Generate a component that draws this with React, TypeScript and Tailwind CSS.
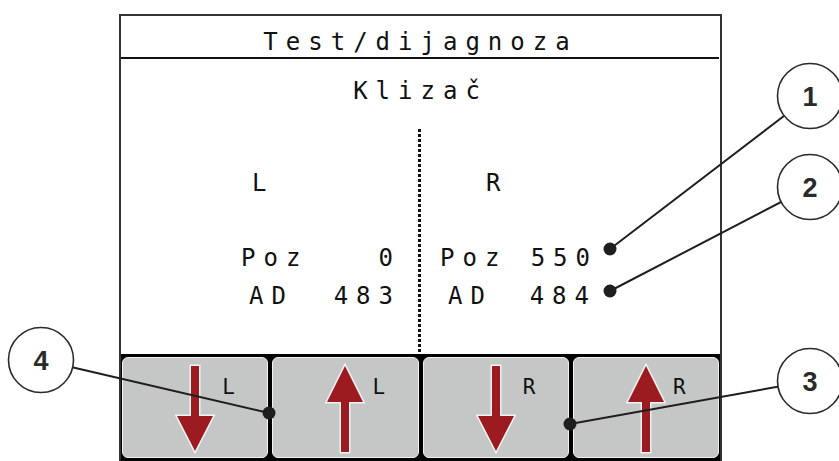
import React from "react";

const mono = "font-['DejaVu_Sans_Mono',monospace]";

function Arrow({ up }: { up?: boolean }) {
  const pts = up
    ? "22,3 40,39 26,39 26,89 18,89 18,39 4,39"
    : "18,3 26,3 26,53 40,53 22,88 4,53 18,53";
  return (
    <svg width="44" height="92" viewBox="0 0 44 92" className="block">
      <polygon
        points={pts}
        fill="#9b1b21"
        stroke="#f4f4f4"
        strokeWidth={3}
        strokeLinejoin="miter"
        paintOrder="stroke"
      />
    </svg>
  );
}

function SoftKey({ up, label }: { up?: boolean; label: string }) {
  return (
    <div className="grid h-[101px] grid-cols-[1fr_auto_1fr] rounded-[6px] border border-[#f2f2f2] bg-[#c5c7c6]">
      <div />
      <div className="pt-[5px]">
        <Arrow up={up} />
      </div>
      <div className={`pl-[5px] pt-[19px] text-[21px] leading-[21px] text-[#111] ${mono}`}>{label}</div>
    </div>
  );
}

function Callouts() {
  const circles = [
    { n: "1", cx: 810, cy: 96, x: 610, y: 249 },
    { n: "2", cx: 810, cy: 187, x: 610, y: 291 },
    { n: "3", cx: 810, cy: 381, x: 570, y: 424 },
    { n: "4", cx: 41, cy: 360, x: 269, y: 413 },
  ];
  return (
    <svg className="pointer-events-none absolute inset-0" width="839" height="461" viewBox="0 0 839 461">
      {circles.map((c) => (
        <g key={c.n}>
          <line x1={c.x} y1={c.y} x2={c.cx} y2={c.cy} stroke="#1e1e1e" strokeWidth={2} />
          <circle cx={c.x} cy={c.y} r={6.5} fill="#1e1e1e" />
          <circle cx={c.cx} cy={c.cy} r={32.5} fill="#fff" stroke="#2a2a2a" strokeWidth={1.6} />
          <text
            x={c.cx}
            y={c.cy + 10}
            textAnchor="middle"
            fontFamily="'Liberation Sans', Arial, sans-serif"
            fontWeight="bold"
            fontSize="27"
            fill="#2a2a2a"
          >
            {c.n}
          </text>
        </g>
      ))}
    </svg>
  );
}

export default function App() {
  return (
    <div className="relative h-[461px] w-[839px] overflow-hidden bg-white">
      <div className="ml-[119px] mt-[14px] h-[460px] w-[603px] border-2 border-b-0 border-[#333]">
        <div className={`h-[41px] pt-[14px] text-center text-[24px] leading-[24px] tracking-[8px] text-[#111] ${mono}`}>
          Test/dijagnoza
        </div>
        <div className="mr-[1px] border-b-2 border-[#111]" />
        <div className={`mt-[20px] h-[24px] text-center text-[24px] leading-[24px] tracking-[8px] text-[#111] ${mono}`}>
          Klizač
        </div>

        <div className={`flex h-[251px] text-[24px] leading-[24px] tracking-[8px] text-[#111] ${mono}`}>
          <div className="w-[297px] pt-[68px]">
            <div className="ml-[131px]">L</div>
            <div className="ml-[120px] mt-[51px] flex w-[160px] justify-between">
              <span>Poz</span>
              <span>0</span>
            </div>
            <div className="ml-[128px] mt-[14px] flex w-[152px] justify-between">
              <span>AD</span>
              <span>483</span>
            </div>
          </div>
          <div className="mt-[26px] w-[3px] bg-[repeating-linear-gradient(to_bottom,#111_0px,#111_3px,transparent_3px,transparent_5px)]" />
          <div className="w-[299px] pt-[68px]">
            <div className="ml-[65px]">R</div>
            <div className="ml-[19px] mt-[51px] flex w-[158px] justify-between">
              <span>Poz</span>
              <span>550</span>
            </div>
            <div className="ml-[27px] mt-[14px] flex w-[149px] justify-between">
              <span>AD</span>
              <span>484</span>
            </div>
          </div>
        </div>

        <div className="grid h-[107px] grid-cols-4 gap-[4px] bg-black px-[1px] pt-[3px]">
          <SoftKey label="L" />
          <SoftKey up label="L" />
          <SoftKey label="R" />
          <SoftKey up label="R" />
        </div>
      </div>
      <Callouts />
    </div>
  );
}
